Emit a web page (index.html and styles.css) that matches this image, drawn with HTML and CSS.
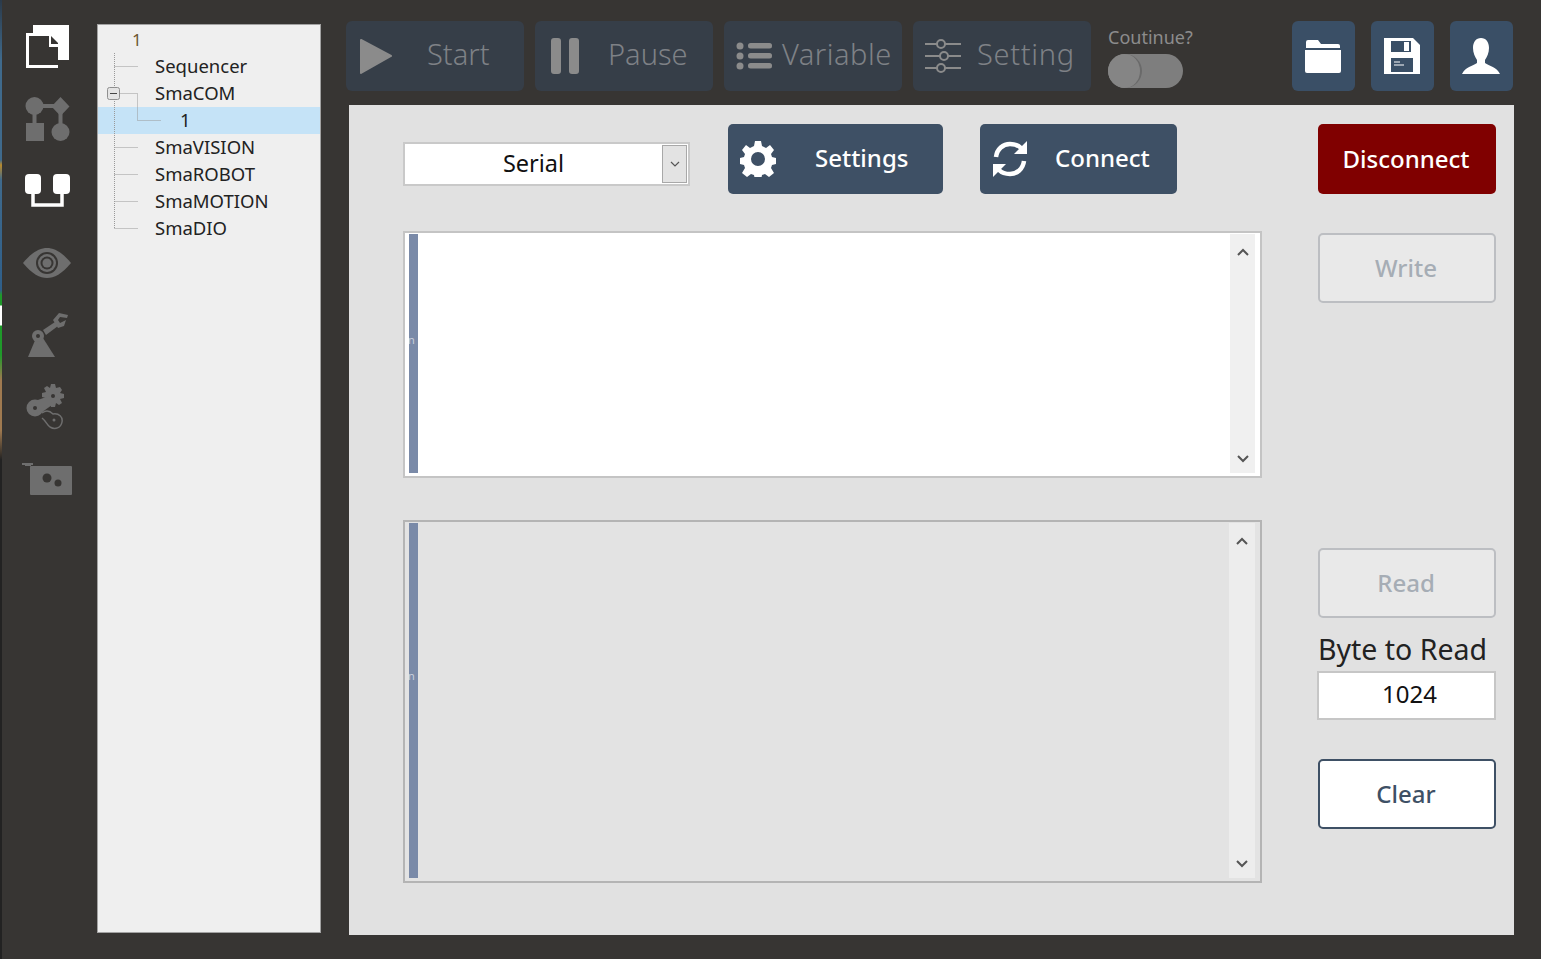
FILE: index.html
```html
<!DOCTYPE html>
<html lang="en">
<head>
  <meta charset="UTF-8" />
  <title>SmaCOM</title>
  <link rel="stylesheet" href="styles.css">
</head>
<body>

  <nav class="sidebar">
    <div class="side-item">
      <svg width="46" height="46" viewBox="0 0 46 46"><path d="M9 1h36v35H34v8H2V9h7z" fill="#fff"/><path d="M5 12h20v11h9v18H5z" fill="#373533"/><path d="M27 12l7 7v1h-7z" fill="#373533"/></svg>
    </div>
    <div class="side-item">
      <svg width="46" height="46" viewBox="0 0 46 46" fill="#6e6e6e"><circle cx="10.500" cy="10" r="9"/><path d="M36.500 1l9 9.500-9 9.500-9-9.500z"/><rect x="2" y="27" width="18" height="18"/><circle cx="36.500" cy="36" r="9"/><path d="M17 8h14v4H17zM8.500 17h4v12h-4zM34.500 17h4v12h-4z"/></svg>
    </div>
    <div class="side-item">
      <svg width="46" height="36" viewBox="0 0 46 36"><rect x="1" y="1" width="16" height="20" rx="4" fill="#fff"/><rect x="29" y="1" width="17" height="20" rx="4" fill="#fff"/><path d="M9 20v12h29V20" fill="none" stroke="#fff" stroke-width="3.500"/></svg>
    </div>
    <div class="side-item">
      <svg width="50" height="32" viewBox="0 0 50 32"><path d="M1 16C10 5 18 1 25 1s15 4 24 15c-9 11-17 15-24 15S10 27 1 16z" fill="#6e6e6e"/><circle cx="25" cy="16" r="11" fill="#373533"/><circle cx="25" cy="16" r="9" fill="#6e6e6e"/><circle cx="25" cy="16" r="6.500" fill="#373533"/><circle cx="25" cy="16" r="4.500" fill="#6e6e6e"/></svg>
    </div>
    <div class="side-item">
      <svg width="42" height="46" viewBox="0 0 42 46" fill="#6e6e6e"><path d="M10 26h7l12 19H2z"/><circle cx="12" cy="24" r="6"/><circle cx="12" cy="24" r="2" fill="#373533"/><path d="M17 18l12-8 3 4-12 9z"/><path d="M27 8l6-7 9 2-1 3-7-1-2 3 2 3 6-3-2 6-6 2z"/></svg>
    </div>
    <div class="side-item">
      <svg width="42" height="46" viewBox="0 0 42 46" fill="#6e6e6e"><path d="M25 0h4l1 4 4-1 2 3-2 3 4 1v4l-4 1 2 4-3 2-3-2-1 4h-4l-1-4-4 1-2-3 2-3-4-1v-4l4-1-2-4 3-2 3 2z"/><circle cx="9" cy="24" r="8.500"/><path d="M9 17l14-5 3 9-14 10z"/><circle cx="9" cy="24" r="2" fill="#373533"/><circle cx="27" cy="12" r="2" fill="#373533"/><path d="M16 29c4-3 8-2 11 1 6-1 10 3 9 8-1 6-7 8-12 5-3-2-4-6-8-9" fill="none" stroke="#6e6e6e" stroke-width="1.500"/><circle cx="28" cy="36" r="1.500"/></svg>
    </div>
    <div class="side-item">
      <svg width="50" height="34" viewBox="0 0 50 34" fill="#6e6e6e"><path d="M0 1h11v2H9v1H3V3H0z"/><rect x="8" y="4" width="42" height="29" rx="1"/><circle cx="25" cy="16" r="4.500" fill="#373533"/><circle cx="36" cy="21" r="3.500" fill="#373533"/></svg>
    </div>
  </nav>

  <aside class="tree">
    <div class="tree-row tree-root">1</div>
    <div class="tree-row">Sequencer</div>
    <div class="tree-row">SmaCOM</div>
    <div class="tree-row tree-child selected">1</div>
    <div class="tree-row">SmaVISION</div>
    <div class="tree-row">SmaROBOT</div>
    <div class="tree-row">SmaMOTION</div>
    <div class="tree-row">SmaDIO</div>
    <svg class="tree-lines" width="80" height="210" viewBox="0 0 80 210">
      <path d="M16.500 28v176M16.500 41.500h23M16.500 122.500h23M16.500 149.500h23M16.500 176.500h23M16.500 203.500h23M16.500 68.500h23v27h24" fill="none" stroke="#999" stroke-dasharray="1 1"/>
      <rect x="9.500" y="62.500" width="12" height="12" rx="2" fill="#e4e4e4" stroke="#8f8f8f"/>
      <path d="M12 68.500h7" stroke="#444"/>
    </svg>
  </aside>

  <main class="main">
    <header class="toolbar">
      <button class="tool-btn gap-start">
        <svg width="32" height="36" viewBox="0 0 32 36"><path d="M1 2l30 16L1 35z" fill="#8b8b8b" stroke="#8b8b8b" stroke-linejoin="round" stroke-width="2"/></svg>
        <span class="tool-label">Start</span>
      </button>
      <button class="tool-btn gap-pause">
        <svg width="28" height="36" viewBox="0 0 28 36" fill="#8b8b8b"><rect width="10" height="36" rx="3"/><rect x="18" width="10" height="36" rx="3"/></svg>
        <span class="tool-label">Pause</span>
      </button>
      <button class="tool-btn gap-variable">
        <svg width="36" height="28" viewBox="0 0 36 28" fill="#8b8b8b"><circle cx="4" cy="4" r="3.500"/><circle cx="4" cy="14" r="3.500"/><circle cx="4" cy="24" r="3.500"/><rect x="12" y="1" width="24" height="5.500" rx="2.500"/><rect x="12" y="11" width="24" height="5.500" rx="2.500"/><rect x="12" y="21" width="24" height="5.500" rx="2.500"/></svg>
        <span class="tool-label">Variable</span>
      </button>
      <button class="tool-btn gap-setting">
        <svg width="36" height="36" viewBox="0 0 36 36" fill="none" stroke="#8b8b8b" stroke-width="2"><path d="M0 6h12M20 6h16M0 18h15M23 18h13M0 30h12M20 30h16"/><circle cx="16" cy="6" r="4"/><circle cx="19" cy="18" r="4"/><circle cx="16" cy="30" r="4"/></svg>
        <span class="tool-label">Setting</span>
      </button>
      <div class="continue">
        <span class="continue-label">Coutinue?</span>
        <div class="toggle"><div class="toggle-knob"></div></div>
      </div>
      <div class="file-btns">
        <button class="icon-btn">
          <svg width="36" height="34" viewBox="0 0 36 34" fill="#fff"><path d="M1 3q0-2 2-2h10l3 4h17q2 0 2 2v2H1z"/><path d="M0 11h36v21q0 2-2 2H2q-2 0-2-2z"/></svg>
        </button>
        <button class="icon-btn">
          <svg width="36" height="36" viewBox="0 0 36 36"><path d="M0 0h29l7 7v29H0z" fill="#fff"/><rect x="7" y="3" width="20" height="11" fill="#3a4f66"/><rect x="20" y="4" width="5" height="9" fill="#fff"/><rect x="7" y="20" width="22" height="14" fill="#3a4f66"/><path d="M10 24h6M10 27h10" stroke="#fff"/></svg>
        </button>
        <button class="icon-btn">
          <svg width="38" height="36" viewBox="0 0 38 36" fill="#fff"><path d="M19 0c5 0 8 4 8 10 0 5-2 9-4 12v3c4 3 12 4 15 11H0c3-7 11-8 15-11v-3c-2-3-4-7-4-12 0-6 3-10 8-10z"/></svg>
        </button>
      </div>
    </header>

    <section class="panel">
      <div class="panel-left">
        <div class="conn-row">
          <div class="combo">
            <span class="combo-text">Serial</span>
            <span class="combo-arrow">
              <svg width="10" height="6" viewBox="0 0 10 6"><path d="M1 1l4 4 4-4" fill="none" stroke="#555" stroke-width="1.200"/></svg>
            </span>
          </div>
          <button class="btn btn-dark btn-settings">
            <svg width="36" height="36" viewBox="0 0 36 36"><path fill="#fff" fill-rule="evenodd" d="M15 0h6l1 5 4 2 4-3 4 5-3 4 1 3 4 1v6l-4 1-1 3 3 5-5 4-4-3-3 1-1 5h-6l-1-5-3-1-4 3-5-4 3-5-1-3-4-1v-6l4-1 1-3-3-4 4-5 4 3 4-2zM18 11a7 7 0 100 14 7 7 0 000-14z"/></svg>
            <span>Settings</span>
          </button>
          <button class="btn btn-dark btn-connect">
            <svg width="36" height="38" viewBox="0 0 36 38" fill="none"><path d="M4 17C5 9 11 4 18 4c4 0 8 1 11 4" stroke="#fff" stroke-width="4.500"/><path d="M35 1v13H22z" fill="#fff"/><path d="M32 21c-1 8-7 13-14 13-4 0-8-1-11-4" stroke="#fff" stroke-width="4.500"/><path d="M1 37V24h13z" fill="#fff"/></svg>
            <span>Connect</span>
          </button>
        </div>

        <div class="editor editor-write">
          <div class="gutter"><span>n</span></div>
          <div class="scrollbar">
            <svg width="12" height="8" viewBox="0 0 12 8"><path d="M1 7l5-5 5 5" fill="none" stroke="#555" stroke-width="2"/></svg>
            <svg width="12" height="8" viewBox="0 0 12 8"><path d="M1 1l5 5 5-5" fill="none" stroke="#555" stroke-width="2"/></svg>
          </div>
        </div>

        <div class="editor editor-read">
          <div class="gutter"><span>n</span></div>
          <div class="scrollbar">
            <svg width="12" height="8" viewBox="0 0 12 8"><path d="M1 7l5-5 5 5" fill="none" stroke="#555" stroke-width="2"/></svg>
            <svg width="12" height="8" viewBox="0 0 12 8"><path d="M1 1l5 5 5-5" fill="none" stroke="#555" stroke-width="2"/></svg>
          </div>
        </div>
      </div>

      <div class="panel-right">
        <button class="btn btn-red">Disconnect</button>
        <button class="btn btn-off btn-write">Write</button>
        <button class="btn btn-off btn-read">Read</button>
        <label class="byte-label">Byte to Read</label>
        <div class="byte-input">1024</div>
        <button class="btn btn-clear">Clear</button>
      </div>
    </section>
  </main>

</body>
</html>
```

FILE: styles.css
```css
* {
  box-sizing: border-box;
}

body {
  margin: 0;
  height: 100vh;
  overflow: hidden;
  background: #373533;
  font-family: "Noto Sans", sans-serif;
  display: grid;
  grid-template-columns: 97px 224px 1fr;
}

/* bit of the desktop showing at the window edge */
body::before {
  content: "";
  position: absolute;
  left: 0;
  top: 0;
  width: 2px;
  height: 100%;
  background: linear-gradient(to bottom, #2b3a4a 0, #3f6a8c 60px, #3f6a8c 160px, #b98a2c 165px, #3f6a8c 180px, #2f5f8a 290px, #1f9a2a 295px, #1f9a2a 305px, #fff 306px, #fff 325px, #1f9a2a 326px, #1f9a2a 355px, #a07a50 380px, #a07a50 430px, #222 460px, #222 100%);
}

button {
  font-family: inherit;
  cursor: pointer;
}

/* left icon bar */
.sidebar {
  padding-top: 11px;
  display: flex;
  flex-direction: column;
}

.side-item {
  height: 72px;
  display: flex;
  align-items: center;
  justify-content: center;
  padding-right: 3px;
}

/* tree */
.tree {
  position: relative;
  margin: 24px 0 26px;
  padding-top: 1px;
  background: #efefef;
  border: 1px solid #a2a2a2;
  font-size: 18.5px;
  color: #222;
}

.tree-lines {
  position: absolute;
  left: 0;
  top: 0;
}

.tree-row {
  height: 27px;
  line-height: 25px;
  padding-left: 57px;
}

.tree-root {
  padding-left: 34px;
  color: #6d5733;
  font-size: 17px;
  line-height: 27px;
}

.tree-child {
  padding-left: 82px;
}

.selected {
  background: #c5e3f7;
}

/* top toolbar */
.main {
  padding: 0 27px 24px 25px;
  display: flex;
  flex-direction: column;
}

.toolbar {
  height: 105px;
  flex-shrink: 0;
  margin-right: 1px;
  padding-top: 21px;
  display: flex;
  gap: 11px;
}

.tool-btn {
  width: 178px;
  height: 70px;
  padding: 0 0 0 12px;
  background: #363e48;
  border: none;
  border-radius: 6px;
  color: #7e8186;
  font-size: 29px;
  font-weight: 300;
  display: flex;
  align-items: center;
}

.tool-label {
  margin-top: -5px;
}

.gap-start {
  padding-left: 14px;
  gap: 35px;
}

.gap-pause {
  padding-left: 16px;
  gap: 29px;
}

.gap-variable {
  gap: 10px;
  letter-spacing: 0.5px;
}

.gap-setting {
  gap: 16px;
  letter-spacing: 0.7px;
}

.continue {
  margin-left: 6px;
  padding-top: 5px;
}

.continue-label {
  display: block;
  height: 28px;
  color: #8c8c8c;
  font-size: 18px;
  line-height: 23px;
}

.toggle {
  width: 75px;
  height: 34px;
  background: #7e7e7e;
  border-radius: 17px;
}

.toggle-knob {
  width: 34px;
  height: 34px;
  background: #858585;
  border-radius: 50%;
  border-right: 2px solid #6a6a6a;
}

.file-btns {
  margin-left: auto;
  display: flex;
  gap: 16px;
}

.icon-btn {
  width: 63px;
  height: 70px;
  padding: 0 2px 0 0;
  background: #3a4f66;
  border: none;
  border-radius: 6px;
  display: flex;
  align-items: center;
  justify-content: center;
}

/* main panel */
.panel {
  flex: 1;
  margin-left: 3px;
  padding: 19px 18px 0 54px;
  background: #e1e1e1;
  display: flex;
  justify-content: space-between;
}

.panel-left {
  width: 859px;
}

.conn-row {
  height: 70px;
  display: flex;
  align-items: center;
}

.combo {
  width: 287px;
  height: 44px;
  margin-top: 10px;
  background: #fff;
  border: 2px solid #c9c9c9;
  display: flex;
  align-items: center;
}

.combo-text {
  flex: 1;
  margin-top: -3px;
  text-align: center;
  color: #111;
  font-size: 23.500px;
}

.combo-arrow {
  width: 25px;
  height: 38px;
  margin-right: 1px;
  background: #e3e3e3;
  border: 1px solid #a8a8a8;
  display: flex;
  align-items: center;
  justify-content: center;
}

.btn {
  height: 70px;
  padding: 0 2px 2px 0;
  border-radius: 5px;
  font-size: 24px;
  font-weight: 500;
  border: 2px solid transparent;
}

.btn-dark {
  padding: 0;
  background: #3e5065;
  color: #fff;
  display: flex;
  align-items: center;
}

.btn-settings {
  width: 215px;
  margin-left: 38px;
  padding-left: 10px;
  gap: 39px;
}

.btn-settings span,
.btn-connect span {
  margin-top: -3px;
}

.btn-connect {
  width: 197px;
  margin-left: 37px;
  padding-left: 10px;
  gap: 27px;
}

.editor {
  display: flex;
  justify-content: space-between;
  border: 2px solid #c4c4c4;
  padding: 1px 5px 3px 4px;
}

.editor-write {
  height: 247px;
  margin-top: 37px;
  background: #fff;
}

.editor-read {
  height: 363px;
  margin-top: 42px;
  background: #e3e3e3;
  border-color: #b4b4b4;
}

.gutter {
  width: 9px;
  background: #7a8aa8;
  color: #c9d0dc;
  font-size: 11px;
  display: flex;
  align-items: center;
  overflow: hidden;
}

.gutter span {
  margin-left: -1px;
  margin-top: -28px;
}

.editor-read .gutter span {
  margin-top: -50px;
}

.scrollbar {
  width: 25px;
  background: #f0f0f0;
  display: flex;
  flex-direction: column;
  align-items: center;
  justify-content: space-between;
  padding: 14px 0 10px;
}

.editor-read .scrollbar {
  background: #ededed;
  width: 26px;
}

.panel-right {
  width: 178px;
  display: flex;
  flex-direction: column;
}

.btn-red {
  background: #800000;
  color: #fff;
}

.btn-off {
  background: #e9e9e9;
  border-color: #bcbec2;
  color: #a6adb5;
}

.btn-write {
  margin-top: 39px;
}

.btn-read {
  margin-top: 245px;
}

.byte-label {
  height: 36px;
  margin-top: 14px;
  color: #222;
  font-size: 28.500px;
  line-height: 34px;
  white-space: nowrap;
}

.byte-input {
  height: 49px;
  margin-left: -1px;
  margin-top: 3px;
  background: #fff;
  border: 2px solid #c6c6c6;
  color: #111;
  font-size: 24px;
  line-height: 42px;
  text-align: center;
  padding-left: 6px;
}

.btn-clear {
  margin-top: 39px;
  background: #fff;
  border-color: #3e5065;
  color: #3e5065;
}
```
